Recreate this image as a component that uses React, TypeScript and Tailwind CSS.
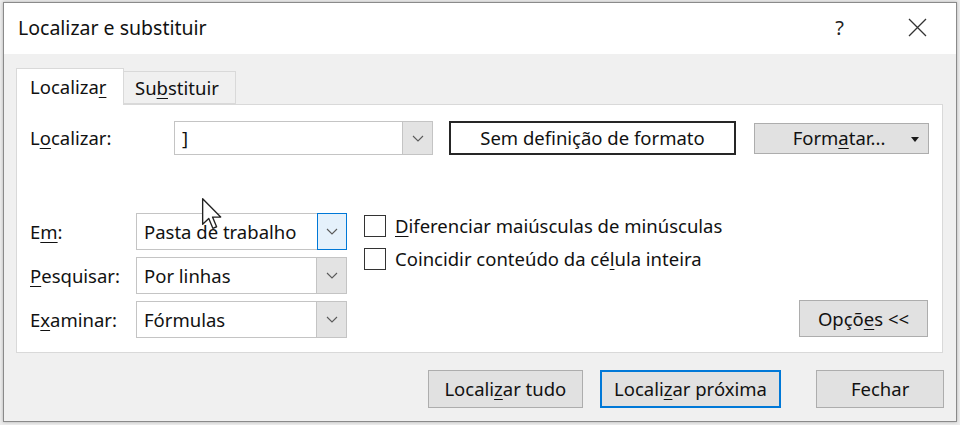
import React from "react";

/* ---------- small pieces ---------- */
const Chevron = () => (
  <svg width="12" height="7" viewBox="0 0 12 7" fill="none">
    <polyline points="1,1 6,6 11,1" stroke="#5a5a5a" strokeWidth="1.1" />
  </svg>
);

function Combo({
  text,
  className,
  focused = false,
}: {
  text: string;
  className: string;
  focused?: boolean;
}) {
  return (
    <div className={`flex bg-white border border-[#c4c4c4] ${className}`}>
      <div className="flex-1 flex items-center pl-[7px] text-[#111]">{text}</div>
      <div
        className={
          focused
            ? "w-[30px] -m-px flex items-center justify-center bg-[#e5f1fb] border border-[#0078d7]"
            : "w-[30px] flex items-center justify-center bg-[#e3e3e3] border-l border-[#c4c4c4]"
        }
      >
        <Chevron />
      </div>
    </div>
  );
}

function Btn({
  children,
  className,
  primary = false,
}: {
  children: React.ReactNode;
  className: string;
  primary?: boolean;
}) {
  return (
    <div
      className={`flex items-center justify-center bg-[#e1e1e1] text-[#111] ${
        primary ? "border-2 border-[#0078d7]" : "border border-[#adadad]"
      } ${className}`}
    >
      {children}
    </div>
  );
}

const U = ({ c }: { c: string }) => (
  <span className="underline underline-offset-[3px] decoration-1">{c}</span>
);

const Check = () => (
  <div className="w-[22px] h-[22px] border border-[#333] bg-white shrink-0" />
);

/* ---------- dialog ---------- */
export default function App() {
  return (
    <div
      className="w-[960px] h-[425px] bg-[#ececec] pt-[2px] pl-[3px] overflow-hidden text-[18.5px] leading-[24px]"
      style={{ fontFamily: '"Noto Sans", "Open Sans", sans-serif' }}
    >
      <div className="relative w-[954px] h-[420px] border border-[#8a8a8a] bg-[#f0f0f0] flex flex-col shadow-[0_0_3px_rgba(0,0,0,0.25)]">
        {/* title bar */}
        <div className="h-[51px] bg-white flex items-center pl-[14px] pr-[29px] shrink-0">
          <span className="text-[19.5px] text-[#111] flex-1 -mt-[2px]">Localizar e substituir</span>
          <span className="text-[20px] text-[#222] mr-[64px] -mt-[2px]">?</span>
          <svg width="19" height="19" viewBox="0 0 19 19" className="-mt-[2px]">
            <path d="M1 1 L18 18 M18 1 L1 18" stroke="#333" strokeWidth="1.3" />
          </svg>
        </div>

        {/* body */}
        <div className="flex-1 pt-[14px] pl-[12px] pr-[12px]">
          {/* tabs */}
          <div className="flex items-end h-[36px]">
            <div className="relative z-10 -mb-px h-[37px] w-[108px] bg-white border border-b-0 border-[#d9d9d9] flex items-center pl-[13px] text-[#111]">
              Localiza<U c="r" />
            </div>
            <div className="h-[33px] w-[112px] border border-l-0 border-[#d9d9d9] flex items-center pl-[11px] text-[#111]">
              Su<U c="b" />stituir
            </div>
          </div>

          {/* panel */}
          <div className="w-[927px] h-[249px] bg-white border border-[#d9d9d9] pt-[16px] pl-[13px] pr-[13px] flex flex-col">
            {/* find row */}
            <div className="flex items-center h-[34px]">
              <span className="w-[144px] text-[#111]">
                L<U c="o" />calizar:
              </span>
              <Combo text="]" className="w-[259px] h-[34px]" />
              <div className="ml-[16px] w-[287px] h-[34px] border-2 border-[#262626] flex items-center justify-center text-[#111]">
                Sem definição de formato
              </div>
              <Btn className="ml-[18px] w-[175px] h-[31px] relative">
                <span className="-ml-[5px]">
                  Form<U c="a" />tar...
                </span>
                <svg width="8" height="5" viewBox="0 0 8 5" className="absolute right-[9px] top-[13px]">
                  <polygon points="0,0 8,0 4,5" fill="#1a1a1a" />
                </svg>
              </Btn>
            </div>

            {/* options */}
            <div className="flex mt-[58px] flex-1 pb-[14px]">
              <div className="flex flex-col gap-[7px]">
                {[
                  { label: <>E<U c="m" />:</>, text: "Pasta de trabalho", focused: true },
                  { label: <><U c="P" />esquisar:</>, text: "Por linhas", focused: false },
                  { label: <>E<U c="x" />aminar:</>, text: "Fórmulas", focused: false },
                ].map((r, i) => (
                  <div key={i} className="flex items-center">
                    <span className="w-[106px] text-[#111]">{r.label}</span>
                    <Combo text={r.text} className="w-[211px] h-[37px]" focused={r.focused} />
                  </div>
                ))}
              </div>

              <div className="ml-[17px] flex flex-col pt-[2px] gap-[11px]">
                <div className="flex items-center h-[22px] gap-[9px] text-[#111]">
                  <Check />
                  <span>
                    <U c="D" />iferenciar maiúsculas de minúsculas
                  </span>
                </div>
                <div className="flex items-center h-[22px] gap-[9px] text-[#111]">
                  <Check />
                  <span>
                    Coincidir conteúdo da cé<U c="l" />ula inteira
                  </span>
                </div>
              </div>

              <div className="flex-1" />
              <Btn className="self-end w-[129px] h-[37px] mr-px mb-px">
                <span>
                  Opçõ<U c="e" />s &lt;&lt;
                </span>
              </Btn>
            </div>
          </div>

          {/* bottom buttons */}
          <div className="flex mt-[17px] pl-[412px]">
            <Btn className="w-[155px] h-[38px]">
              <span>
                Locali<U c="z" />ar tudo
              </span>
            </Btn>
            <Btn className="ml-[17px] w-[182px] h-[38px]" primary>
              <span>
                Locali<U c="z" />ar próxima
              </span>
            </Btn>
            <Btn className="ml-[35px] w-[128px] h-[38px]">Fechar</Btn>
          </div>
        </div>

        {/* mouse pointer over the combo */}
        <svg
          width="24"
          height="34"
          viewBox="0 0 13 20"
          className="absolute left-[196px] top-[194px] z-20 pointer-events-none"
        >
          <path
            d="M1 1 L1 16 L4.6 12.6 L7 18.4 L9.2 17.5 L6.8 11.8 L11.6 11.8 Z"
            fill="white"
            stroke="#222"
            strokeWidth="0.8"
            strokeLinejoin="round"
          />
        </svg>
      </div>
    </div>
  );
}
